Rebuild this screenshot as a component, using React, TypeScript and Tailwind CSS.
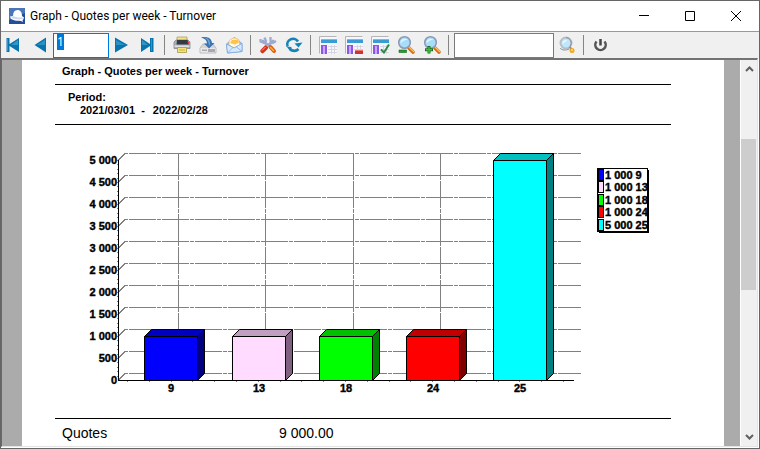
import type { ReactNode } from "react";

type Bar = { label: string; value: number; front: string; top: string; side: string };

const bars: Bar[] = [
  { label: "9", value: 1000, front: "#0000ff", top: "#0000c0", side: "#000080" },
  { label: "13", value: 1000, front: "#ffdcff", top: "#c0a0c0", side: "#806080" },
  { label: "18", value: 1000, front: "#00ff00", top: "#00c000", side: "#008000" },
  { label: "24", value: 1000, front: "#ff0000", top: "#c00000", side: "#800000" },
  { label: "25", value: 5000, front: "#00ffff", top: "#00c0c0", side: "#008080" },
];

const ticks = [0, 500, 1000, 1500, 2000, 2500, 3000, 3500, 4000, 4500, 5000];

const formatNumber = (value: number) => (value >= 1000 ? `${Math.floor(value / 1000)} ${String(value % 1000).padStart(3, "0")}` : String(value));

// Chart geometry, in viewBox units
const AXIS_X = 63;
const BASE_Y = 255;
const DEPTH = 7;
const BAR_WIDTH = 53;

const toY = (value: number) => BASE_Y - Math.round(value * 0.044);
const barX = (index: number) => Math.round(89.4 + index * 87.2);
const gridX = (index: number) => 123.5 + Math.round(index * 87.3);

function QuotesChart() {
  return (
    <svg viewBox="0 0 616 293" className="block h-auto w-full font-['Liberation_Sans',Arial,sans-serif] text-[11px] font-bold" role="img" aria-label="Quotes per week">
      <g fill="none" stroke="#808080" shapeRendering="crispEdges">
        {ticks.map((tick) => (
          <g key={tick}>
            <path d={`M${AXIS_X} ${toY(tick) + 0.5}l${DEPTH} -${DEPTH}`} />
            <path d={`M${AXIS_X + DEPTH} ${toY(tick) - DEPTH + 0.5}H526`} strokeDasharray="27 1 4 1" strokeDashoffset="29" />
          </g>
        ))}
        {bars.map((bar, index) => (
          <path key={bar.label} d={`M${gridX(index)} ${toY(5000) - DEPTH}V${BASE_Y - DEPTH}`} strokeDasharray="27 1 4 1" strokeDashoffset="5" />
        ))}
      </g>

      {bars.map((bar, index) => {
        const x = barX(index) + 0.5;
        const y = toY(bar.value) + 0.5;
        const base = BASE_Y + 0.5;
        return (
          <g key={bar.label} stroke="#000" strokeLinejoin="round">
            <path fill={bar.top} d={`M${x} ${y}l${DEPTH} -${DEPTH}h${BAR_WIDTH}l-${DEPTH} ${DEPTH}z`} />
            <path fill={bar.side} d={`M${x + BAR_WIDTH} ${y}l${DEPTH} -${DEPTH}V${base - DEPTH}L${x + BAR_WIDTH} ${base}z`} />
            <path fill={bar.front} d={`M${x} ${y}h${BAR_WIDTH}V${base}H${x}z`} />
          </g>
        );
      })}

      <g stroke="#000" shapeRendering="crispEdges">
        <path d={`M${AXIS_X + 0.5} ${toY(5000)}V${BASE_Y + 1}M${AXIS_X} ${BASE_Y + 0.5}H519`} />
        <path stroke="#808080" strokeDasharray="1 3.4" d={`M${AXIS_X - 0.5} ${toY(5000)}V${BASE_Y}`} />
        <path stroke="#808080" strokeDasharray="1 20.8" d={`M72 ${BASE_Y + 1.5}H519`} />
      </g>

      <g textAnchor="end" stroke="#000" strokeWidth=".4">
        {ticks.map((tick) => (
          <text key={tick} x={AXIS_X - 1} y={toY(tick) + 4}>{formatNumber(tick)}</text>
        ))}
      </g>
      <g textAnchor="middle" stroke="#000" strokeWidth=".4">
        {bars.map((bar, index) => (
          <text key={bar.label} x={barX(index) + 27} y={BASE_Y + 12}>{bar.label}</text>
        ))}
      </g>

      <path d="M544 45h50v63h-50z" />
      <path fill="#fff" stroke="#000" shapeRendering="crispEdges" d="M542.5 43.5h50v63h-50z" />
      {bars.map((bar, index) => (
        <g key={bar.label} stroke="#000">
          <rect x="543.5" y={44.5 + Math.round(index * 12.4)} width="5" height="11" fill={bar.front} />
          <text x="550" y={54 + Math.round(index * 12.4)} strokeWidth=".4">{`${formatNumber(bar.value)} ${bar.label}`}</text>
        </g>
      ))}
    </svg>
  );
}

function ToolButton({ label, children }: { label: string; children: ReactNode }) {
  return (
    <button type="button" aria-label={label} className="flex h-6 w-[26px] shrink-0 items-center justify-center hover:bg-[#dbe9f5]">
      <svg viewBox="0 0 18 18" className="size-[18px] overflow-visible" fill="none">{children}</svg>
    </button>
  );
}

function Separator() {
  return <div className="mr-1 ml-[3px] h-5 w-px shrink-0 bg-[#858585]" />;
}

function LayoutIcon() {
  return (
    <>
      <path fill="#fcfcff" stroke="#b5b5b5" d="M.5 17.5V.5h17" />
      <path fill="#f5f5fc" d="M1 1h17v17H1z" />
      <path fill="#3a9bd5" d="M2 3h16v4H2z" />
      <path fill="#77bde5" d="M2 3h16v1H2z" />
      <path fill="#8d55e5" d="M2 9h6v9H2z" />
      <path fill="#c9a5ff" d="M4 10h2v8H4z" />
      <path stroke="#d5d5df" d="M9 10.5h9M9 13.5h9M9 16.5h9M12.5 9v9M15.5 9v9" />
    </>
  );
}

function MagnifierIcon() {
  return (
    <>
      <path stroke="#d96a12" strokeWidth="3.6" strokeLinecap="round" d="m12 12 4 4" />
      <path stroke="#ffc15e" strokeWidth="1.3" strokeLinecap="round" d="m12 11 4.5 4.5" />
      <circle cx="7.5" cy="6.5" r="5.8" fill="#a9dcf7" stroke="#8b98b4" strokeWidth="1.5" />
      <path fill="#e3f6ff" d="M3.6 7.5a4 4 0 0 1 4-4.8c2 0 2.8 1 2.8 1-2.8.1-4.8 1-6.8 3.8z" />
    </>
  );
}

function Toolbar() {
  return (
    <div className="flex h-[26px] shrink-0 items-center overflow-hidden bg-[#f0f0f0]">
      <ToolButton label="First page">
        <path fill="#0874ae" d="M1.5 2h3v6L14 2v14l-9.500-6v6h-3z" />
        <path fill="#3195c5" d="M2 3h1v12H2zM13 4v5H6z" />
      </ToolButton>
      <ToolButton label="Previous page">
        <path fill="#0874ae" d="M15 1.500v15L3.500 9z" />
        <path fill="#2b91c3" d="M14 4v5H6z" />
      </ToolButton>
      <input
        type="text"
        aria-label="Page number"
        defaultValue="1"
        autoFocus
        onFocus={(event) => event.target.select()}
        className="h-[25px] w-14 shrink-0 border border-[#0078d7] bg-white pr-1 pb-2 pl-[3px] font-['Open_Sans',sans-serif] text-[12px] leading-[14px] outline-none selection:bg-[#0078d7] selection:text-white"
      />
      <ToolButton label="Next page">
        <path fill="#0874ae" d="M2 1.500v15L15 9z" />
        <path fill="#2b91c3" d="M3 4v5h9z" />
      </ToolButton>
      <ToolButton label="Last page">
        <path fill="#0874ae" d="M2 2v14l9-6v6h3.500V2H11v6z" />
        <path fill="#3195c5" d="M3 4v5h6zM12 3h1v12h-1z" />
      </ToolButton>
      <Separator />
      <ToolButton label="Print">
        <path fill="#f1e28b" stroke="#a99845" strokeWidth=".7" d="M4 1h10v4H4z" />
        <path fill="#aeb1b8" stroke="#777c86" strokeWidth=".7" d="m3 4-2 2v6.500h16V6l-2-2z" />
        <path fill="#353942" d="M4 4h10.500L16 8.500H3.500z" />
        <path fill="#dfe1e6" d="M1.500 9.500h15V11h-15z" />
        <circle cx="15.500" cy="6.500" r="1" fill="#ef3838" />
        <path fill="#f4e576" stroke="#a99845" strokeWidth=".8" d="M4.500 11.500h9v5h-9z" />
        <path stroke="#c8af41" d="M6 14h6" />
      </ToolButton>
      <ToolButton label="Save report">
        <path fill="#d4d5d8" stroke="#a5a7ac" strokeWidth=".7" d="m4 8-3 4v5h16v-5l-3-4z" />
        <path fill="#e8e8e9" d="M1.500 12h15v4.500h-15z" />
        <path fill="#a7a9ae" d="M3 13.500h5V15H3zM9 13h7v3H9z" />
        <path fill="#3974b2" d="M2 1.500c6-1.500 10.500.5 11 5.500h2.500L10 12.500 5 7.500h3C8 4.500 6 2.500 2 1.500z" />
        <path fill="#79a8d5" d="M5 1.500c4 .5 6 2.500 6 6.500l-1 2c-.2-4-1-7-5-8.500z" />
      </ToolButton>
      <ToolButton label="Send by mail">
        <path fill="#9fc2ed" stroke="#719bd1" strokeWidth=".8" d="m1.500 8 8-6.500 7.500 6v8L2.500 17z" />
        <path fill="#fff8e7" stroke="#e8b95b" strokeWidth=".8" d="M4 5.500c2-4 7-4.500 10-1.500l1 5-6 3-5-3z" />
        <path fill="#ffc34d" d="m5 7 2-3 6-.5 1 3-4 2z" />
        <path fill="#d7eafd" stroke="#75a4db" strokeWidth=".7" d="m1.500 8 7.500 4 8-4.500v8L2.500 17zM2.500 17 8 11.500m9 4-6-5" />
      </ToolButton>
      <Separator />
      <ToolButton label="Settings">
        <path stroke="#d8321d" strokeWidth="4.500" strokeLinecap="round" d="M7 11.500 3.500 15" />
        <path stroke="#9ca9d1" strokeWidth="3" strokeLinecap="round" d="M4 5 8.500 9m5.500-4L9 9.500" />
        <path stroke="#9ca9d1" strokeWidth="2.200" d="M1.500 3v2.500L5 7l2-2-1.500-3.500M11.500 1v4L14 7l3-2" />
        <path stroke="#ff9b76" d="M6.500 11 3 14.500" />
        <path stroke="#e05c0e" strokeWidth="4" strokeLinecap="round" d="m11.500 11 3.500 4" />
        <path stroke="#ffb52c" strokeWidth="1.500" d="m11 11 4 4" />
      </ToolButton>
      <ToolButton label="Refresh">
        <path stroke="#1584b5" strokeWidth="2.600" d="M2.600 10.500A5.800 5.800 0 0 1 13 5.500M13.500 13A5.800 5.800 0 0 1 5 13" />
        <path fill="#1584b5" d="m9.500 7.500 8-1-4 5zM1.500 10.500l5 .5-1 4.500z" />
      </ToolButton>
      <Separator />
      <ToolButton label="Report layout"><LayoutIcon /></ToolButton>
      <ToolButton label="Remove layout">
        <LayoutIcon />
        <path fill="#cb3434" d="M10 14h8v4h-8z" />
        <path fill="#ed7770" d="M10 14h8v1h-8z" />
      </ToolButton>
      <ToolButton label="Apply layout">
        <LayoutIcon />
        <path stroke="#2b8b43" strokeWidth="2" d="m10 13.500 3 3 5-8" />
      </ToolButton>
      <ToolButton label="Zoom out">
        <MagnifierIcon />
        <path fill="#309632" stroke="#126d19" strokeWidth=".6" d="M2 14h7.500v2.500H2z" />
      </ToolButton>
      <ToolButton label="Zoom in">
        <MagnifierIcon />
        <path stroke="#176f20" strokeWidth="3" d="M6 10v7.500m-4-3.700h8" />
        <path stroke="#46ba3a" strokeWidth="1.500" d="M6 11v6m-3-3.200h6" />
      </ToolButton>
      <Separator />
      <input type="text" aria-label="Search text" className="ml-px h-[25px] w-[100px] min-w-0 border border-[#7a7a7a] bg-white px-1 text-[12px] outline-none" />
      <ToolButton label="Search">
        <circle cx="8" cy="7" r="5.500" fill="#bfe6fb" stroke="#b8bec5" strokeWidth="2" />
        <path stroke="#86919d" d="M8 1.500a5.500 5.500 0 0 1 4 9M2 12c2 2.500 6 2.500 9 1" />
        <path fill="#fff" d="M4.500 8c0-3 2-4 5-4-2 1-3 2-5 4z" />
        <path stroke="#8d8d8d" strokeWidth="2" d="m11.500 11 2 2" />
        <circle cx="14" cy="14.500" r="2.500" fill="#f6a51c" />
        <circle cx="14" cy="14" r="1" fill="#ffe05a" />
      </ToolButton>
      <Separator />
      <ToolButton label="Close report">
        <path stroke="#555" strokeWidth="2.500" d="M4.500 5.500a5.200 5.200 0 1 0 8 0" />
        <path stroke="#444" strokeWidth="2.500" d="M8.500 3v6.500" />
      </ToolButton>
    </div>
  );
}

function TitleBar() {
  return (
    <header className="flex h-[30px] shrink-0 items-center bg-white">
      <svg viewBox="0 0 16 16" className="ml-2 size-4 shrink-0" aria-hidden="true">
        <path fill="#234e9a" d="M0 0h16v16H0z" />
        <path fill="#4c75b9" d="M0 0h16v5L0 12z" />
        <path fill="#fff" d="M4 8c0-4 1.500-6 4.500-6S13 4.500 13 8l2 1.500-1 2.500c-3 1.500-8 1-12-1L1 8.500z" />
        <path fill="#cbdaf0" d="M4 8c3 1.500 6 2 9 1l1 2c-4 1-8 .5-12-1z" />
        <path fill="#fff" d="m10 12 4 2-1-3z" />
      </svg>
      <h1 className="ml-[5px] min-w-0 flex-1 truncate font-[Roboto,sans-serif] text-[12px] text-black">Graph - Quotes per week - Turnover</h1>
      <button type="button" aria-label="Minimize" className="flex h-full w-[46px] items-center justify-center hover:bg-[#e5e5e5]">
        <svg viewBox="0 0 10 10" className="size-2.5" stroke="#000"><path d="M0 4.500h10" /></svg>
      </button>
      <button type="button" aria-label="Maximize" className="flex h-full w-[46px] items-center justify-center hover:bg-[#e5e5e5]">
        <svg viewBox="0 0 10 10" className="size-2.5" fill="none" stroke="#000"><path d="M.5.500h9v9h-9z" /></svg>
      </button>
      <button type="button" aria-label="Close" className="flex h-full w-[46px] items-center justify-center hover:bg-[#e5e5e5]">
        <svg viewBox="0 0 10 10" className="size-2.5" stroke="#000"><path d="m0 0 10 10M10 0 0 10" /></svg>
      </button>
    </header>
  );
}

export default function App() {
  return (
    <div className="flex h-screen flex-col overflow-hidden border border-[#666] bg-white text-black">
      <TitleBar />
      <div className="h-px shrink-0 bg-[#999]" />
      <Toolbar />
      <main className="mr-px mb-px flex min-h-0 flex-1 border-t-2 border-r border-b border-l border-t-[#737373] border-r-[#e3e3e3] border-b-[#e3e3e3] border-l-[#696969] bg-[#ababab]">
        <article className="ml-5 min-w-0 flex-1 overflow-hidden bg-white pr-[53px] pl-[33px] font-['Liberation_Sans',Arial,sans-serif]">
          <h2 className="h-6 pl-[7px] text-[11px] leading-[22px] font-bold">Graph - Quotes per week - Turnover</h2>
          <section className="h-[41px] border-y border-black pt-[6px] pl-[13px] text-[11px] leading-[13px] font-bold">
            <p>Period:</p>
            <p className="flex gap-2 pl-3">
              <span>2021/03/01&nbsp; -</span>
              <span>2022/02/28</span>
            </p>
          </section>
          <QuotesChart />
          <dl className="flex border-t border-black pt-1 pl-[7px] text-[14px] leading-5">
            <dt className="w-[217px]">Quotes</dt>
            <dd>9 000.00</dd>
          </dl>
        </article>
        <aside className="ml-4 flex w-[17px] shrink-0 flex-col border-l border-white bg-[#f0f0f0]">
          <button type="button" aria-label="Scroll up" className="flex h-[18px] items-center justify-center">
            <svg viewBox="0 0 9 6" className="h-1.5 w-[9px]" fill="none" stroke="#606060" strokeWidth="2"><path d="m1 5 3.500-3.500L8 5" /></svg>
          </button>
          <div className="flex flex-1 flex-col">
            <div className="grow-[61]" />
            <div className="mr-px grow-[151] bg-[#cdcdcd]" />
            <div className="grow-[138]" />
          </div>
          <button type="button" aria-label="Scroll down" className="flex h-[18px] items-center justify-center">
            <svg viewBox="0 0 9 6" className="h-1.5 w-[9px]" fill="none" stroke="#606060" strokeWidth="2"><path d="m1 1 3.500 3.500L8 1" /></svg>
          </button>
        </aside>
      </main>
    </div>
  );
}
